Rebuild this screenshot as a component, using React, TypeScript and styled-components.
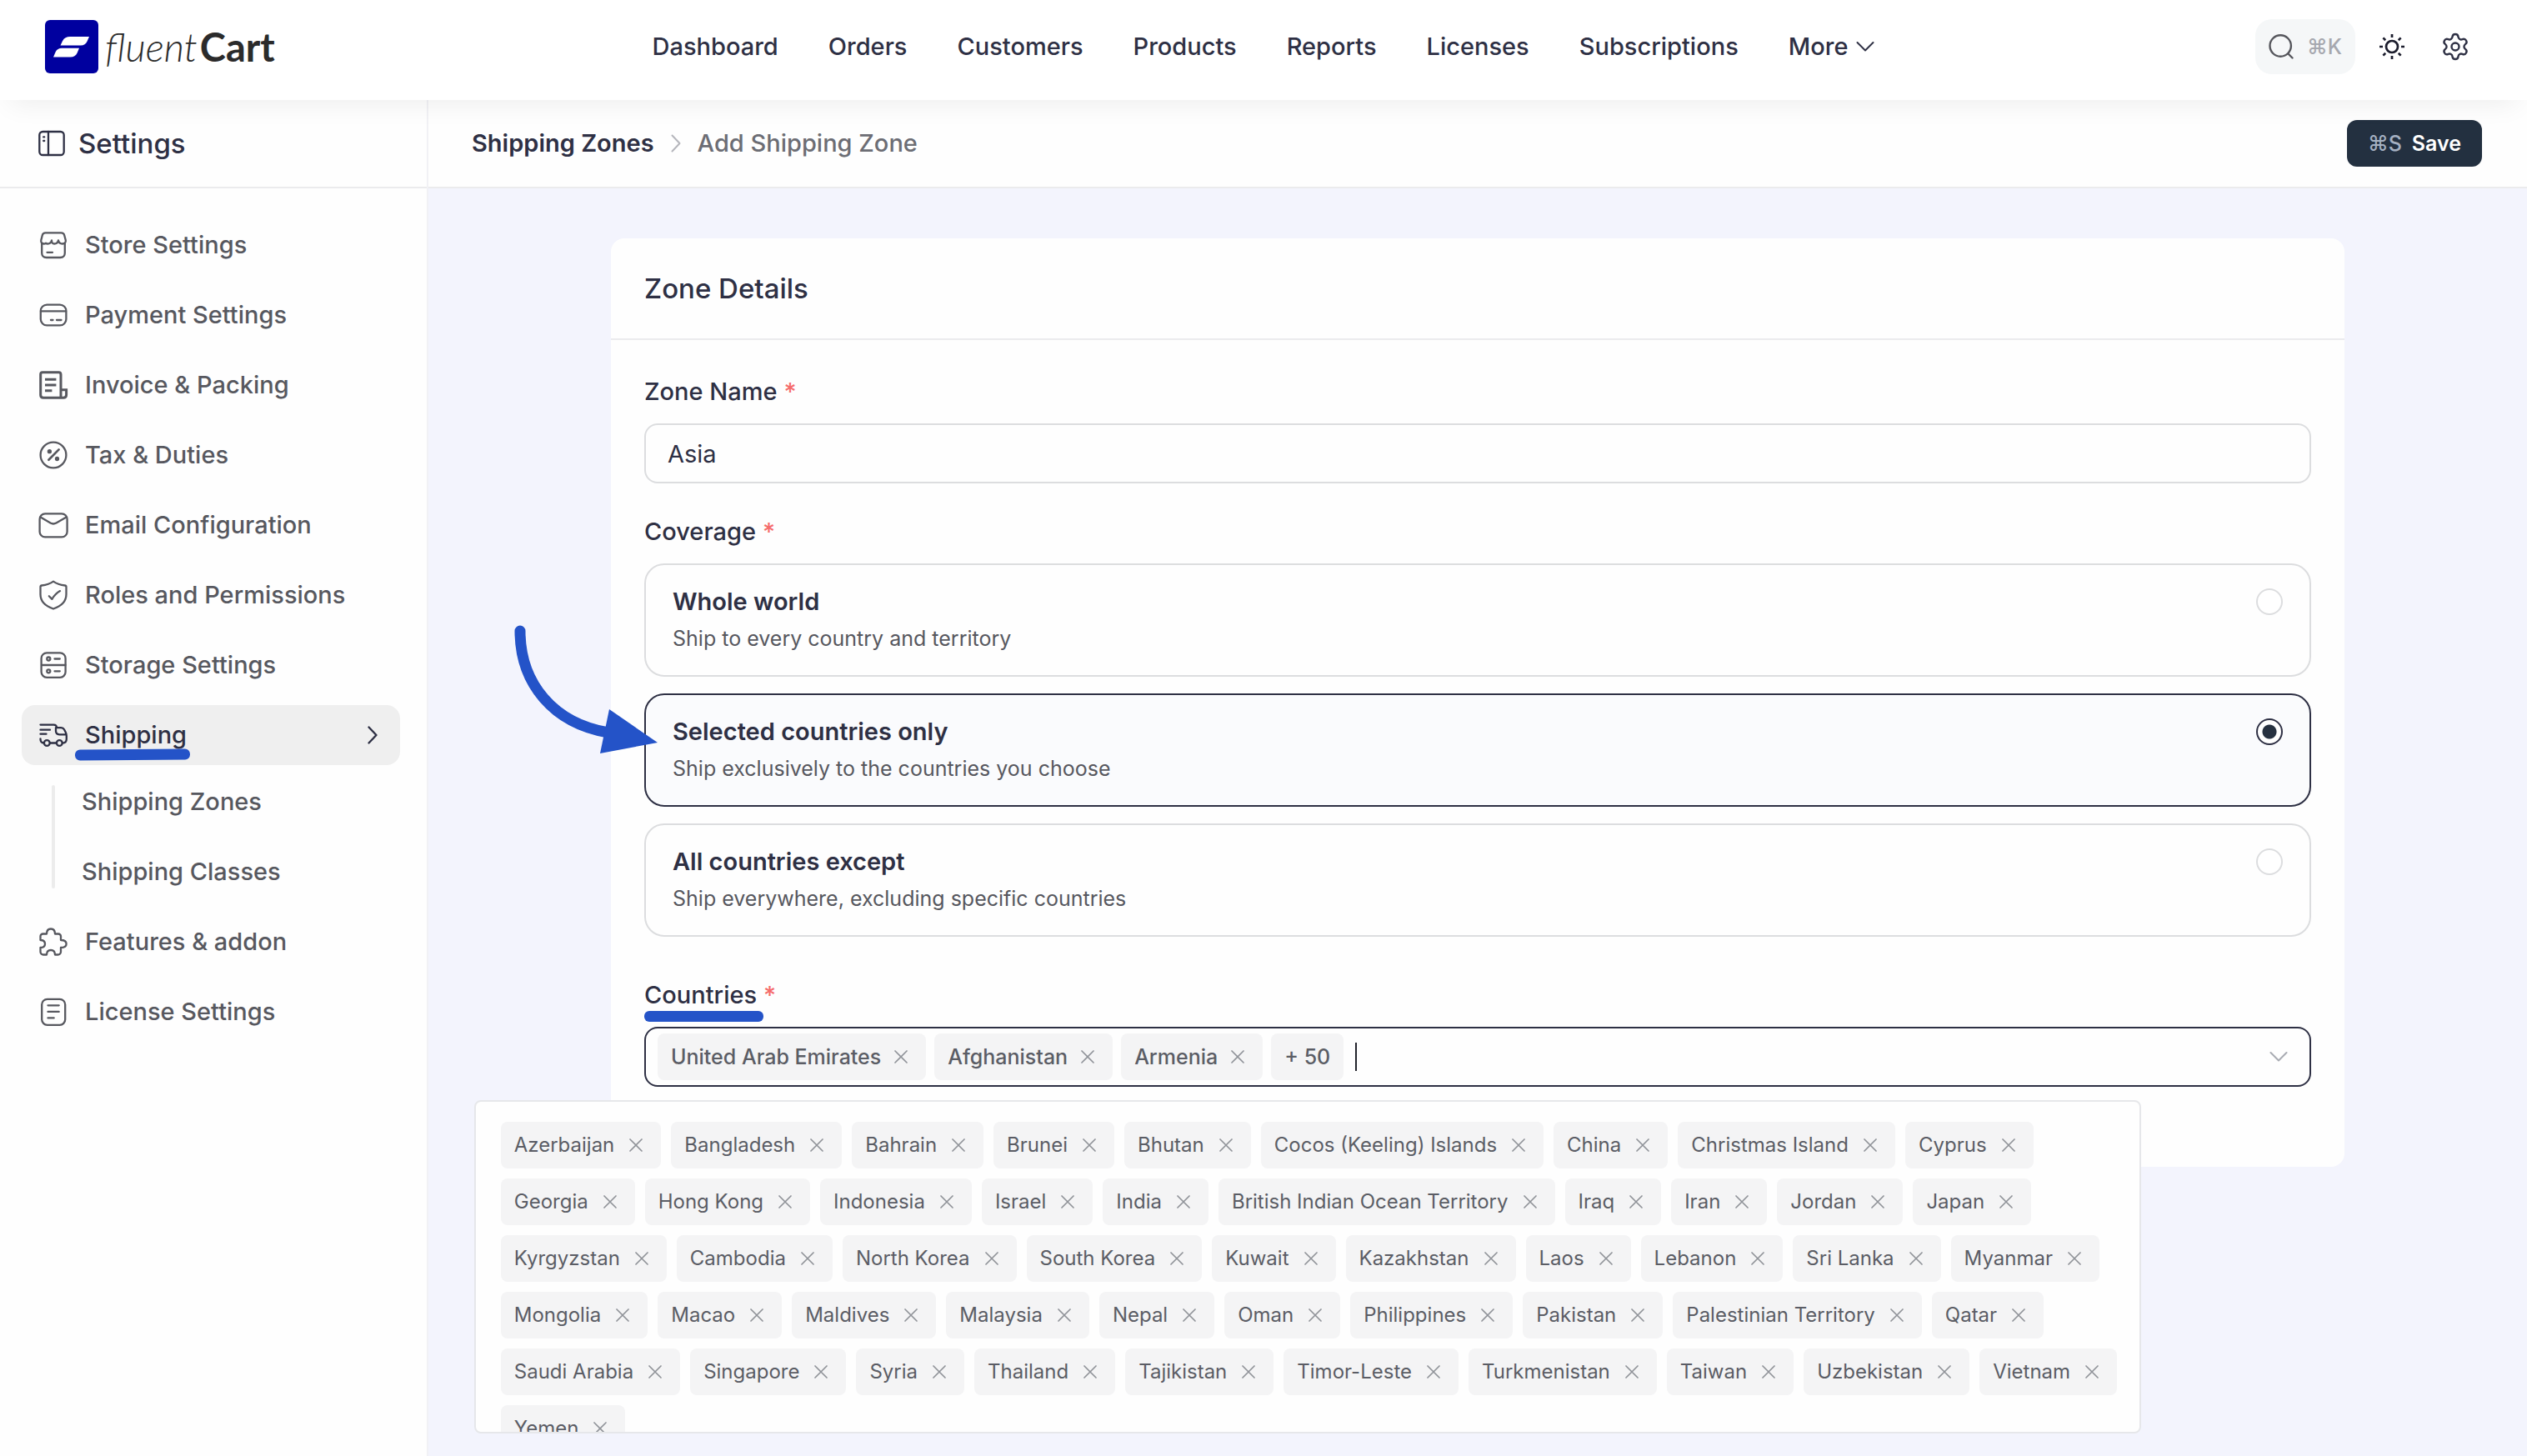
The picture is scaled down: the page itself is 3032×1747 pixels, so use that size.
import React, { useState } from "react";
import styled, { createGlobalStyle, css } from "styled-components";
import { Settings as GearIcon } from "lucide-react";

const ink = "#2e3044";
const muted = "#57585f";
const line = "#ebebed";
const field = "#dcdddf";
const marker = "#2453c8";

const GlobalStyle = createGlobalStyle`
  *, *::before, *::after { box-sizing: border-box; }
  body {
    margin: 0;
    background: #f3f4fd;
    color: ${ink};
    font: 500 29px/40px Inter, "Noto Sans", "DejaVu Sans", sans-serif;
    -webkit-font-smoothing: antialiased;
  }
  a { color: inherit; text-decoration: none; }
  button, input { font: inherit; color: inherit; }
  button { border: 0; padding: 0; background: none; cursor: pointer; }
  ul { list-style: none; margin: 0; padding: 0; }
  h1, h2, p { margin: 0; }
  svg { display: block; flex: none; }
`;

/* ---------- shell ---------- */

const Page = styled.div`
  min-height: 100vh;
  display: flex;
  flex-direction: column;
`;

const TopBar = styled.header`
  position: relative;
  z-index: 2;
  display: grid;
  grid-template-columns: 1fr auto 1fr;
  align-items: center;
  height: 120px;
  padding: 0 54px 8px;
  background: #fff;
  box-shadow: 0 16px 32px -12px rgba(0, 0, 0, 0.07);
`;

const Brand = styled.a`
  display: flex;
  align-items: center;
  gap: 8px;
  color: #2b2b2b;
  font: 300 italic 47px/64px Lato, sans-serif;
`;

const BrandName = styled.span`
  display: flex;
  gap: 3px;
`;

const BrandStrong = styled.strong`
  font-weight: 700;
  font-style: normal;
`;

const MainNav = styled.nav`
  display: flex;
  gap: 60px;
`;

const MoreButton = styled.button`
  display: flex;
  align-items: center;
  gap: 10px;
`;

const Tools = styled.div`
  display: flex;
  justify-content: flex-end;
  align-items: center;
  gap: 12px;
`;

const SearchButton = styled.button`
  display: flex;
  align-items: center;
  justify-content: space-between;
  width: 120px;
  height: 66px;
  padding: 0 16px;
  border-radius: 20px;
  background: #f5f7f8;
  color: #55565c;
`;

const Keys = styled.kbd<{ $tone: string }>`
  color: ${p => p.$tone};
  font: 500 25px/32px Inter, "DejaVu Sans", sans-serif;
`;

const IconButton = styled.button`
  display: grid;
  place-items: center;
  width: 64px;
  height: 64px;
`;

const Columns = styled.div`
  flex: 1;
  display: grid;
  grid-template-columns: 514px minmax(0, 1fr);
`;

/* ---------- sidebar ---------- */

const Sidebar = styled.aside`
  background: #fefefe;
  border-right: 2px solid #f1f1f5;
`;

const SidebarTitle = styled.h1`
  display: flex;
  align-items: center;
  gap: 16px;
  height: 106px;
  padding: 0 46px;
  border-bottom: 2px solid ${line};
  font-size: 33px;
  font-weight: 500;
`;

const SideList = styled.ul`
  display: flex;
  flex-direction: column;
  gap: 12px;
  padding: 32px 32px 32px 26px;
`;

const SideLink = styled.a<{ $active?: boolean }>`
  display: flex;
  align-items: center;
  gap: 20px;
  height: 72px;
  padding: 0 26px 0 20px;
  border-radius: 16px;
  color: ${p => (p.$active ? ink : muted)};
  background: ${p => (p.$active ? "#efefef" : "transparent")};
`;

const SideLabel = styled.span`
  position: relative;
  margin-right: auto;
`;

const SubList = styled.ul`
  position: relative;
  display: flex;
  flex-direction: column;
  gap: 12px;
  margin-top: 8px;
  padding-left: 72px;

  &::before {
    content: "";
    position: absolute;
    left: 36px;
    top: 16px;
    bottom: 16px;
    width: 4px;
    border-radius: 2px;
    background: #ececec;
  }
`;

const SubLink = styled.a`
  display: flex;
  align-items: center;
  height: 72px;
  color: ${muted};
`;

const Underline = styled.span<{ $tilt?: boolean }>`
  position: absolute;
  left: ${p => (p.$tilt ? -12 : 0)}px;
  right: ${p => (p.$tilt ? -4 : -8)}px;
  bottom: -10px;
  height: 13px;
  border-radius: 6px;
  background: ${marker};
  ${p => p.$tilt && css`transform: rotate(-0.5deg);`}
`;

/* ---------- content ---------- */

const Content = styled.main`
  min-width: 0;
`;

const PageBar = styled.div`
  display: flex;
  align-items: center;
  justify-content: space-between;
  height: 106px;
  padding: 0 54px 0 52px;
  background: #fefefe;
  border-bottom: 2px solid ${line};
`;

const Crumbs = styled.nav`
  display: flex;
  align-items: center;
  gap: 19px;
  color: #6c6d74;
`;

const CrumbLink = styled.a`
  color: ${ink};
  font-weight: 600;
`;

const SaveButton = styled.button`
  display: flex;
  align-items: center;
  justify-content: center;
  gap: 12px;
  height: 56px;
  padding: 0 25px;
  border-radius: 12px;
  background: #233040;
  color: #fff;
  font-size: 25px;
  font-weight: 600;
`;

const Card = styled.section`
  max-width: 2080px;
  margin: 60px auto 0;
  border-radius: 16px;
  background: #fefefe;
`;

const CardTitle = styled.h2`
  display: flex;
  align-items: center;
  height: 122px;
  padding: 0 40px;
  border-bottom: 2px solid ${line};
  font-size: 33px;
  font-weight: 500;
`;

const CardBody = styled.form`
  display: flex;
  flex-direction: column;
  gap: 36px;
  padding: 40px 40px 96px;
`;

const Field = styled.div`
  display: flex;
  flex-direction: column;
  gap: 16px;
`;

const labelStyle = css`
  display: flex;
  gap: 8px;
  line-height: 44px;
`;
const Label = styled.label`${labelStyle}`;
const GroupLabel = styled.div`${labelStyle}`;
const LabelText = styled.span`position: relative;`;
const Required = styled.span`color: #f56c6c;`;

const TextInput = styled.input`
  width: 100%;
  height: 72px;
  padding: 0 26px;
  border: 2px solid ${field};
  border-radius: 16px;
  background: #fefefe;
  font-size: 29px;
  font-weight: 400;
  outline: none;
`;

const Options = styled.div`
  display: flex;
  flex-direction: column;
  gap: 20px;
  margin-bottom: 12px;
`;

const Option = styled.label<{ $on: boolean }>`
  position: relative;
  display: flex;
  justify-content: space-between;
  padding: 24px 32px;
  border: 2px solid ${p => (p.$on ? ink : field)};
  border-radius: 24px;
  background: ${p => (p.$on ? "#fafbfd" : "#fefefe")};
`;

const OptionText = styled.span`
  display: grid;
  gap: 4px;
`;
const OptionTitle = styled.span`font-weight: 600;`;
const OptionHint = styled.span`
  color: ${muted};
  font-size: 25px;
  font-weight: 400;
`;

const Radio = styled.input`
  appearance: none;
  width: 32px;
  height: 32px;
  margin: 4px 0;
  border: 2px solid ${field};
  border-radius: 50%;
  background: #fff;

  &:checked {
    border-color: ${ink};
    background: radial-gradient(circle, #263140 8px, #fff 9px);
  }
`;

const Pointer = styled.svg`
  position: absolute;
  left: -163px;
  top: -86px;
  pointer-events: none;
`;

/* ---------- country picker ---------- */

const Picker = styled.div`
  display: flex;
  align-items: center;
  gap: 10px;
  height: 72px;
  padding: 0 26px 0 14px;
  border: 2px solid ${ink};
  border-radius: 16px;
  background: #fefefe;
`;

const Chip = styled.span<{ $strong?: boolean }>`
  display: inline-flex;
  align-items: center;
  gap: ${p => (p.$strong ? 10 : 12)}px;
  height: 56px;
  padding: 0 16px;
  border-radius: 8px;
  background: #f4f4f5;
  color: #5b5d65;
  font-size: ${p => (p.$strong ? 25 : 24)}px;
  font-weight: ${p => (p.$strong ? 500 : 400)};
  white-space: nowrap;
`;

const RemoveButton = styled.button`
  display: grid;
  place-items: center;
  width: 28px;
  height: 28px;
  color: #909399;
`;

const MoreChip = styled.span`
  position: relative;
`;

const Popover = styled.div`
  position: absolute;
  z-index: 1;
  top: 80px;
  left: 50%;
  width: 2000px;
  height: 400px;
  transform: translateX(-50%);
  overflow: hidden;
  border: 2px solid #e6e7ea;
  border-radius: 8px;
  background: #fefefe;
`;

const PopoverList = styled.ul`
  display: flex;
  flex-wrap: wrap;
  gap: 12px;
  padding: 24px 16px 24px 30px;

  li { display: flex; }
`;

const Caret = styled.span`
  width: 2px;
  height: 34px;
  margin-left: 4px;
  background: #22242c;
`;

const PickerInput = styled.input`
  flex: 1;
  min-width: 0;
  border: 0;
  outline: 0;
  background: none;
`;

/* ---------- drawings ---------- */

const Glyph = ({ children, w = 2.3 }: { children: React.ReactNode; w?: number }) => (
  <svg width="36" height="36" viewBox="0 0 36 36" fill="none" stroke="currentColor" strokeWidth={w}
    strokeLinecap="round" strokeLinejoin="round" aria-hidden="true">{children}</svg>
);

const glyphs: Record<string, React.ReactNode> = {
  store: <Glyph><path d="M8.5 3.4h19c2.200 0 3.200 .9 3.700 2.900l1.600 6c.5 2.700-1.300 4.200-3.800 4.200-2.600 0-4.500-1.500-5-4-.6 2.500-2.400 4-4.800 4-2 0-3.200-1.200-3.200-4-.7 2.600-2.600 4-4.800 4-.8 0-1.600-.2-2.100-.8-.7.5-1.500.8-2.300.8-2.400 0-4.100-1.600-3.500-4.200l1.500-6c.5-2 1.500-2.900 3.700-2.900z" /><path d="M4.200 16v11.500c0 3.700 1.600 5.500 5.500 5.500h16.600c3.900 0 5.500-1.800 5.500-5.500V16M10.500 26.800h6.500" /></Glyph>,
  card: <Glyph><rect x="2.800" y="5.600" width="30.600" height="24.800" rx="7.500" /><path d="M3 13.400h30M15 24h2.500M22 24h5.500" /></Glyph>,
  invoice: <Glyph w={3}><path d="M27 23.500V5.500C27 3.500 26 2.700 24.500 2.700H5C3.500 2.700 2.700 3.500 2.700 5v25c0 2 1 3.300 3.300 3.300h24c2.500 0 3.600-1.300 3.600-3.600v-6H27v9" strokeLinecap="butt" strokeLinejoin="miter" /><path d="M8 11.200h13.400M8 17.900h13.400M8 24.700h8.400" strokeLinecap="butt" /></Glyph>,
  percent: <Glyph><circle cx="18" cy="18" r="15.400" /><path d="M12.400 23.800L24.600 11.400" strokeWidth="2.700" /><circle cx="13.400" cy="13.700" r="1.500" fill="currentColor" /><circle cx="22.500" cy="22.500" r="1.500" fill="currentColor" /></Glyph>,
  mail: <Glyph><rect x="1.600" y="4.400" width="33" height="28" rx="6.500" /><path d="M3.500 9l11 6.500c2.500 1.400 4.500 1.400 7 0L32.700 9" /></Glyph>,
  shield: <Glyph><path d="M18 1.600c-3.800 2.800-8.800 4.300-14 4.900-1 .1-1.500.8-1.500 2V17c0 8.500 6 14.300 15.500 17.500C27.500 31.300 33.500 25.500 33.500 17V8.500c0-1.200-.5-1.900-1.500-2-5.200-.6-10.200-2.100-14-4.900z" /><path d="M12.800 19.300l3.600 3.600c2.500-4.200 5.200-7.200 9.600-9.800" /></Glyph>,
  storage: <Glyph><rect x="3.600" y="3.400" width="29" height="29.400" rx="6.500" /><path d="M4 18h28.500M19.500 10.500h6.300M19.500 25.300h6.300" /><circle cx="12.300" cy="10.500" r="2" /><circle cx="12.300" cy="25.300" r="2" /></Glyph>,
  truck: <Glyph><path d="M2.500 5.600h16c2.500 0 3.500 1 3.500 3.600M2.500 11.700h11.500M2.500 16.700h7M2.500 22.500c0 3.500 1 5 4.200 5M14 27.500h7.700M29 27.500c3.500 0 4.800-1.300 4.800-4.800v-4c0-1.500-.3-2.700-1-4l-1.800-3.400c-.8-1.500-2-2.200-3.700-2.200H21v4c0 2.900 1.300 4.200 4.200 4.200h8.500" /><circle cx="10.300" cy="27.500" r="3.400" /><circle cx="25.300" cy="27.500" r="3.400" /></Glyph>,
  puzzle: <Glyph><path d="M10 8.500C10 4.700 12 2.500 15 2.500s5 2.200 5 6h4a3 3 0 0 1 3 3V16c4 0 6.600 1.500 6.600 4.500S31 25 27 25v5a3.500 3.500 0 0 1-3.500 3.500H20c0-3.600-1.700-5.500-5-5.500s-5 1.900-5 5.500H6A3.500 3.500 0 0 1 2.500 30v-5C6 25 8 23.500 8 20.500S6 16 2.500 16v-4.500a3 3 0 0 1 3-3z" /></Glyph>,
  license: <Glyph><rect x="4.200" y="2.800" width="28" height="31" rx="6.500" /><path d="M11.500 10.300h13.200M11.500 17.900h13.200M11.500 25.400h7.200" /></Glyph>,
};

const PanelIcon = () => (
  <svg width="32" height="32" viewBox="0 0 32 32" fill="none" stroke="currentColor" strokeWidth="2.300" strokeLinecap="round" aria-hidden="true">
    <rect x="1.300" y="2" width="29.400" height="28" rx="4" /><path d="M12 2v28M6.200 8.400h1M6.200 13h1" />
  </svg>
);

const Chevron = ({ d = "right", color = "currentColor", w = 2 }: { d?: "right" | "down"; color?: string; w?: number }) => (
  <svg width={d === "down" ? 22 : 14} height={d === "down" ? 14 : 24} viewBox={d === "down" ? "0 0 22 14" : "0 0 14 24"}
    fill="none" stroke={color} strokeWidth={w} strokeLinecap="round" strokeLinejoin="round" aria-hidden="true">
    <path d={d === "down" ? "M1.500 2l9.500 9.500L20.500 2" : "M2.500 2.500L11.500 12l-9 9.500"} />
  </svg>
);

const Cross = () => (
  <svg width="16" height="16" viewBox="0 0 16 16" fill="none" stroke="currentColor" strokeWidth="1.700" strokeLinecap="round" aria-hidden="true">
    <path d="M1 1l14 14M15 1L1 15" />
  </svg>
);

const LogoMark = () => (
  <svg width="64" height="64" viewBox="0 0 64 64" aria-hidden="true">
    <rect width="64" height="64" rx="6" fill="#00009f" />
    <path d="M18.500 30.500L21 25.200C22.800 21.600 26 20 30 20h23l-2.500 5.800c-1.400 3.200-4 4.700-7.500 4.700z" fill="#fff" />
    <path d="M10 44.500l2.700-6.300c1.300-3 4-4.500 7.500-4.500H41l-2.500 6c-1.300 3.200-4.200 4.800-8 4.800z" fill="#fff" />
  </svg>
);

const SearchIcon = () => (
  <svg width="30" height="30" viewBox="0 0 30 30" fill="none" stroke="currentColor" strokeWidth="2.400" strokeLinecap="round" aria-hidden="true">
    <circle cx="14.200" cy="14" r="12.700" /><path d="M23.500 23.500l5 5" />
  </svg>
);

const SunIcon = () => (
  <svg width="32" height="32" viewBox="0 0 32 32" fill="none" stroke="#1b1c2c" strokeWidth="2.700" aria-hidden="true">
    <circle cx="16" cy="16" r="7" />
    <path d="M16 1v4M16 27v4M1 16h4M27 16h4M5.400 5.400l2.800 2.800M23.800 23.800l2.800 2.800M5.400 26.600l2.800-2.800M23.800 8.200l2.800-2.800" />
  </svg>
);

/* ---------- data ---------- */

const topLinks = ["Dashboard", "Orders", "Customers", "Products", "Reports", "Licenses", "Subscriptions"];

const sideLinks = [
  { icon: "store", text: "Store Settings" },
  { icon: "card", text: "Payment Settings" },
  { icon: "invoice", text: "Invoice & Packing" },
  { icon: "percent", text: "Tax & Duties" },
  { icon: "mail", text: "Email Configuration" },
  { icon: "shield", text: "Roles and Permissions" },
  { icon: "storage", text: "Storage Settings" },
  { icon: "truck", text: "Shipping", children: ["Shipping Zones", "Shipping Classes"] },
  { icon: "puzzle", text: "Features & addon" },
  { icon: "license", text: "License Settings" },
];

const coverage = [
  { id: "world", title: "Whole world", hint: "Ship to every country and territory" },
  { id: "selected", title: "Selected countries only", hint: "Ship exclusively to the countries you choose" },
  { id: "except", title: "All countries except", hint: "Ship everywhere, excluding specific countries" },
];

const shown = ["United Arab Emirates", "Afghanistan", "Armenia"];

const collapsed = [
  "Azerbaijan", "Bangladesh", "Bahrain", "Brunei", "Bhutan", "Cocos (Keeling) Islands", "China", "Christmas Island", "Cyprus",
  "Georgia", "Hong Kong", "Indonesia", "Israel", "India", "British Indian Ocean Territory", "Iraq", "Iran", "Jordan", "Japan",
  "Kyrgyzstan", "Cambodia", "North Korea", "South Korea", "Kuwait", "Kazakhstan", "Laos", "Lebanon", "Sri Lanka", "Myanmar",
  "Mongolia", "Macao", "Maldives", "Malaysia", "Nepal", "Oman", "Philippines", "Pakistan", "Palestinian Territory", "Qatar",
  "Saudi Arabia", "Singapore", "Syria", "Thailand", "Tajikistan", "Timor-Leste", "Turkmenistan", "Taiwan", "Uzbekistan", "Vietnam",
  "Yemen",
];

const CountryChip = ({ name, strong }: { name: string; strong?: boolean }) => (
  <Chip $strong={strong}>
    {name}
    <RemoveButton type="button" aria-label={`Remove ${name}`}><Cross /></RemoveButton>
  </Chip>
);

export default function App() {
  const [zone, setZone] = useState("Asia");
  const [mode, setMode] = useState("selected");

  return (
    <Page>
      <GlobalStyle />
      <TopBar>
        <Brand href="#"><LogoMark /><BrandName>fluent<BrandStrong>Cart</BrandStrong></BrandName></Brand>
        <MainNav>
          {topLinks.map(t => <a key={t} href="#">{t}</a>)}
          <MoreButton type="button">More <Chevron d="down" /></MoreButton>
        </MainNav>
        <Tools>
          <SearchButton type="button" aria-label="Search"><SearchIcon /><Keys $tone="#a6a8af">⌘K</Keys></SearchButton>
          <IconButton type="button" aria-label="Theme"><SunIcon /></IconButton>
          <IconButton type="button" aria-label="Settings"><GearIcon size={36} strokeWidth={1.6} /></IconButton>
        </Tools>
      </TopBar>

      <Columns>
        <Sidebar>
          <SidebarTitle><PanelIcon />Settings</SidebarTitle>
          <nav>
            <SideList>
              {sideLinks.map(l => (
                <li key={l.text}>
                  <SideLink href="#" $active={!!l.children}>
                    {glyphs[l.icon]}
                    <SideLabel>{l.text}{l.children && <Underline $tilt />}</SideLabel>
                    {l.children && <Chevron w={2.4} />}
                  </SideLink>
                  {l.children && (
                    <SubList>
                      {l.children.map(c => <li key={c}><SubLink href="#">{c}</SubLink></li>)}
                    </SubList>
                  )}
                </li>
              ))}
            </SideList>
          </nav>
        </Sidebar>

        <Content>
          <PageBar>
            <Crumbs>
              <CrumbLink href="#">Shipping Zones</CrumbLink>
              <Chevron color="#b5b6bc" />
              <span>Add Shipping Zone</span>
            </Crumbs>
            <SaveButton type="button"><Keys $tone="#a5b1c2">⌘S</Keys>Save</SaveButton>
          </PageBar>

          <Card>
            <CardTitle>Zone Details</CardTitle>
            <CardBody>
              <Field>
                <Label htmlFor="zone-name">Zone Name <Required>*</Required></Label>
                <TextInput id="zone-name" value={zone} onChange={e => setZone(e.target.value)} />
              </Field>

              <Field>
                <GroupLabel id="coverage-label">Coverage <Required>*</Required></GroupLabel>
                <Options role="radiogroup" aria-labelledby="coverage-label">
                  {coverage.map(o => (
                    <Option key={o.id} $on={mode === o.id}>
                      <OptionText>
                        <OptionTitle>{o.title}</OptionTitle>
                        <OptionHint>{o.hint}</OptionHint>
                      </OptionText>
                      <Radio type="radio" name="coverage" checked={mode === o.id} onChange={() => setMode(o.id)} />
                      {o.id === "selected" && (
                        <Pointer width="180" height="164" viewBox="612 748 180 164" aria-hidden="true">
                          <path d="M624 757C624 820 664 868 730 879" fill="none" stroke={marker} strokeWidth="13" strokeLinecap="round" />
                          <path d="M731 851L789 891L720 904z" fill={marker} />
                        </Pointer>
                      )}
                    </Option>
                  ))}
                </Options>
              </Field>

              <Field>
                <Label htmlFor="countries"><LabelText>Countries<Underline /></LabelText> <Required>*</Required></Label>
                <Picker>
                  {shown.map(c => <CountryChip key={c} name={c} strong />)}
                  <MoreChip>
                    <Chip $strong>+ 50</Chip>
                    <Popover>
                      <PopoverList>
                        {collapsed.map(c => <li key={c}><CountryChip name={c} /></li>)}
                      </PopoverList>
                    </Popover>
                  </MoreChip>
                  <Caret />
                  <PickerInput id="countries" type="text" />
                  <Chevron d="down" color="#a8abb2" />
                </Picker>
              </Field>
            </CardBody>
          </Card>
        </Content>
      </Columns>
    </Page>
  );
}
